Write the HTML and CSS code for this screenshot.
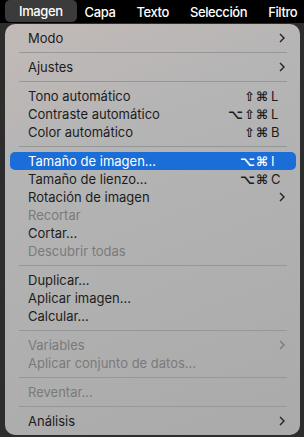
FILE: index.html
```html
<!DOCTYPE html>
<html lang="es">
<head>
  <meta charset="UTF-8" />
  <meta name="viewport" content="width=device-width, initial-scale=1.0"/>
  <title>Imagen</title>
  <link rel="stylesheet" href="styles.css">
</head>
<body>

  <div class="menubar">
    <span class="bar-item active">Imagen</span>
    <span class="bar-item">Capa</span>
    <span class="bar-item">Texto</span>
    <span class="bar-item">Selección</span>
    <span class="bar-item">Filtro</span>
  </div>

  <div class="menu">
    <div class="item sub">Modo<svg class="chev" viewBox="0 0 6 10"><polyline points="1,1 5,5 1,9"/></svg></div>
    <div class="sep"></div>
    <div class="item sub">Ajustes<svg class="chev" viewBox="0 0 6 10"><polyline points="1,1 5,5 1,9"/></svg></div>
    <div class="sep"></div>
    <div class="item">Tono automático<span class="keys"><span class="mods">⇧⌘</span><span class="key">L</span></span></div>
    <div class="item">Contraste automático<span class="keys"><span class="mods">⌥⇧⌘</span><span class="key">L</span></span></div>
    <div class="item">Color automático<span class="keys"><span class="mods">⇧⌘</span><span class="key">B</span></span></div>
    <div class="sep"></div>
    <div class="item selected">Tamaño de imagen...<span class="keys"><span class="mods">⌥⌘</span><span class="key">I</span></span></div>
    <div class="item">Tamaño de lienzo...<span class="keys"><span class="mods">⌥⌘</span><span class="key">C</span></span></div>
    <div class="item sub">Rotación de imagen<svg class="chev" viewBox="0 0 6 10"><polyline points="1,1 5,5 1,9"/></svg></div>
    <div class="item disabled">Recortar</div>
    <div class="item">Cortar...</div>
    <div class="item disabled">Descubrir todas</div>
    <div class="sep"></div>
    <div class="item">Duplicar...</div>
    <div class="item">Aplicar imagen...</div>
    <div class="item">Calcular...</div>
    <div class="sep"></div>
    <div class="item sub disabled">Variables<svg class="chev" viewBox="0 0 6 10"><polyline points="1,1 5,5 1,9"/></svg></div>
    <div class="item disabled">Aplicar conjunto de datos...</div>
    <div class="sep"></div>
    <div class="item disabled">Reventar...</div>
    <div class="sep"></div>
    <div class="item sub">Análisis<svg class="chev" viewBox="0 0 6 10"><polyline points="1,1 5,5 1,9"/></svg></div>
  </div>

</body>
</html>
```

FILE: styles.css
```css
body {
  margin: 0;
  background-color: #2d2d2d;
  font-family: Inter, "Noto Sans", "DejaVu Sans", sans-serif;
  font-size: 13px;
  overflow: hidden;
}
.menubar {
  display: flex;
  height: 23px;
  background-color: #000;
  padding-left: 5px;
  white-space: nowrap;
}
.bar-item {
  display: flex;
  align-items: center;
  padding: 0 11px 0 10px;
  color: #fff;
  font-weight: 500;
  font-size: 13px;
  letter-spacing: -0.4px;
  border-radius: 5px;
}
.bar-item.active {
  background-color: #3b3b3b;
  height: 22px;
  padding: 0 14px;
  margin-right: -2px;
}
.menu {
  width: 286px;
  margin: 1px 0 0 5px;
  padding: 5px 4px 5px 5px;
  border-radius: 10px;
  background: linear-gradient(160deg, #c2bab7 0%, #b6b5b5 25%, #afafaf 65%, #aaaaaa 100%);
  color: #1c1c1c;
}
.item {
  display: flex;
  align-items: center;
  justify-content: space-between;
  height: 18px;
  padding: 0 11px 0 18px;
  border-radius: 5px;
}
.item.disabled {
  color: #7a7a7a;
}
.item.selected {
  background-color: #1b6dd7;
  color: #fff;
}
.sep {
  height: 1px;
  margin: 5px 9px 5px 9px;
  background-color: #979797;
}
.keys {
  display: flex;
  align-items: center;
  width: 60px;
  justify-content: flex-end;
  padding-right: 1px;
}
.mods {
  font-family: "DejaVu Sans", sans-serif;
  font-size: 13px;
  font-weight: bold;
  letter-spacing: 1px;
  margin-right: 2px;
}
.key {
  width: 13px;
}
.chev {
  width: 6px;
  height: 10px;
  fill: none;
  stroke: #222;
  stroke-width: 1.4;
}
.disabled .chev {
  stroke: #7a7a7a;
}
```
